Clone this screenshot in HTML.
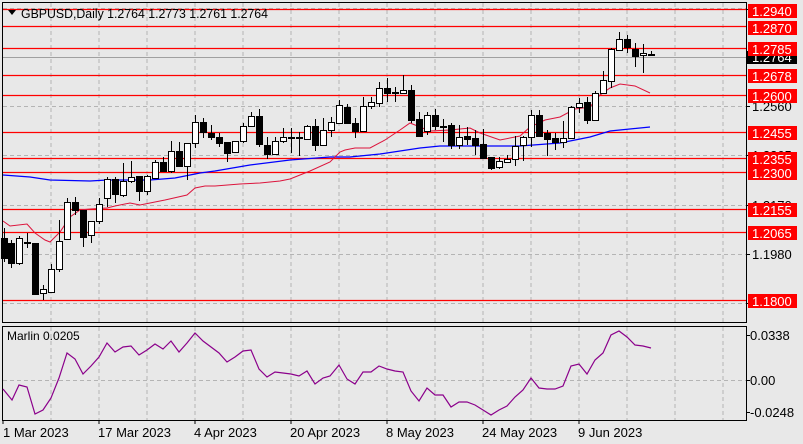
<!DOCTYPE html>
<html><head><meta charset="utf-8"><style>
html,body{margin:0;padding:0;background:#e8e8e8;}
svg{display:block;font-family:"Liberation Sans",sans-serif;}
</style></head><body>
<svg id="s" width="803" height="444" viewBox="0 0 803 444" xmlns="http://www.w3.org/2000/svg">
<rect width="803" height="444" fill="#e8e8e8"/>
<g stroke="#b4b4b4" stroke-dasharray="4,3" stroke-width="1" fill="none">
<path d="M51 3V322M99 3V322M147 3V322M195 3V322M243 3V322M291 3V322M339 3V322M387 3V322M435 3V322M483 3V322M531 3V322M579 3V322M627 3V322M675 3V322M723 3V322"/>
<path d="M51 327V420M99 327V420M147 327V420M195 327V420M243 327V420M291 327V420M339 327V420M387 327V420M435 327V420M483 327V420M531 327V420M579 327V420M627 327V420M675 327V420M723 327V420"/>
<path d="M3 8.5H746M3 106.5H746M3 155.5H746M3 205.5H746M3 254.5H746M3 303.5H746M3 380.5H746"/>
</g>
<line x1="3" y1="57.5" x2="746" y2="57.5" stroke="#a0a0a0"/>
<g stroke="#ff0000" stroke-width="1.3">
<line x1="3" y1="9.5" x2="746" y2="9.5"/><line x1="3" y1="26.5" x2="746" y2="26.5"/>
<line x1="3" y1="48.5" x2="746" y2="48.5"/><line x1="3" y1="75.5" x2="746" y2="75.5"/>
<line x1="3" y1="95.5" x2="746" y2="95.5"/><line x1="3" y1="132.5" x2="746" y2="132.5"/>
<line x1="3" y1="158.5" x2="746" y2="158.5"/><line x1="3" y1="172.5" x2="746" y2="172.5"/>
<line x1="3" y1="209.5" x2="746" y2="209.5"/><line x1="3" y1="232.5" x2="746" y2="232.5"/>
<line x1="3" y1="300.5" x2="746" y2="300.5"/>
</g>
<polyline fill="none" stroke="#0000ff" stroke-width="1.3" points="3,175 30,177 50,180 90,181 107,180 150,180 175,178 190,175 200,173 215,171 250,165 290,160 330,157 350,157 380,154 420,148 440,146 480,146 520,146 560,143 590,137 610,131 650,127"/>
<polyline fill="none" stroke="#dc143c" stroke-width="1" points="3,221 10,226 27,224 35,233 45,240 50,242 60,232 70,217 80,210 90,209 107,208 115,206 130,203 140,205 155,202 165,200 187,195 195,188 205,186 215,186 240,184 260,183 280,181 290,179 310,171 330,162 340,152 345,150 355,148 370,148 385,140 400,130 410,123 420,127 430,131 450,130 470,128 480,133 500,140 520,136 530,127 545,120 560,117 575,109 590,107 600,95 610,88 620,84 635,86 650,93"/>
<g id="c"></g>
<rect x="2.5" y="2.5" width="744" height="320" fill="none" stroke="#000" stroke-width="1"/>
<rect x="2.5" y="326.5" width="744" height="94" fill="none" stroke="#000" stroke-width="1"/>
<polyline fill="none" stroke="#8b008b" stroke-width="1.2" points="3,389 12,400 19,385 27,387 35,414 43,410 51,398 59,378 67,353 75,359 83,374 91,366 99,357 107,343 115,352 123,347 131,346 139,355 147,350 155,344 163,349 171,341 179,352 187,343 195,333 203,341 211,347 219,353 227,362 235,357 243,351 251,350 259,369 267,377 275,372 283,373 291,374 299,376 307,371 315,384 323,378 330,376 339,365 347,379 355,384 363,372 371,372 379,366 387,369 395,371 403,372 411,391 419,401 427,388 435,395 443,395 451,407 459,402 467,402 475,405 483,410 491,415 499,410 507,406 515,397 523,390 531,378 539,388 547,389 555,389 563,386 571,366 579,364 587,374 595,360 603,353 611,335 619,331 627,337 635,345 643,346 651,348"/>
<path d="M8 10L16 10L12 15Z" fill="#000"/>
<text x="21" y="18" font-size="13" fill="#000" textLength="247" lengthAdjust="spacingAndGlyphs">GBPUSD,Daily  1.2764 1.2773 1.2761 1.2764</text>
<text x="7" y="340" font-size="12" fill="#000">Marlin 0.0205</text>
<g stroke="#000"><path d="M746 9.5h4M746 106.5h4M746 155.5h4M746 205.5h4M746 254.5h4M746 303.5h4M746 335.5h4M746 380.5h4M746 412.5h4M3 420v4M99 420v4M195 420v4M291 420v4M387 420v4M483 420v4M579 420v4"/></g>
<g font-size="13" fill="#000">
<text x="752" y="111">1.2560</text>
<text x="752" y="160">1.2365</text>
<text x="752" y="210">1.2170</text>
<text x="752" y="259">1.1980</text>
<text x="750" y="340">0.0338</text>
<text x="750" y="385">0.00</text>
<text x="750" y="417">-0.0248</text>
</g>
<rect x="747" y="51" width="50" height="13" fill="#000"/>
<text x="752" y="62" font-size="13" fill="#fff">1.2764</text>
<g fill="#ff0000">
<rect x="748" y="4" width="49" height="14"/><rect x="748" y="21" width="49" height="14"/>
<rect x="748" y="42" width="49" height="14"/><rect x="748" y="69" width="49" height="14"/>
<rect x="748" y="89" width="49" height="14"/><rect x="748" y="126" width="49" height="14"/>
<rect x="748" y="152" width="49" height="14"/><rect x="748" y="166" width="49" height="14"/>
<rect x="748" y="203" width="49" height="14"/><rect x="748" y="226" width="49" height="14"/>
<rect x="748" y="294" width="49" height="14"/>
</g>
<g font-size="13" fill="#fff">
<text x="752" y="16">1.2940</text><text x="752" y="33">1.2870</text>
<text x="752" y="54">1.2785</text><text x="752" y="81">1.2678</text>
<text x="752" y="101">1.2600</text><text x="752" y="138">1.2455</text>
<text x="752" y="164">1.2355</text><text x="752" y="178">1.2300</text>
<text x="752" y="215">1.2155</text><text x="752" y="238">1.2065</text>
<text x="752" y="306">1.1800</text>
</g>
<g font-size="13" fill="#000">
<text x="3" y="437">1 Mar 2023</text><text x="98" y="437">17 Mar 2023</text>
<text x="194" y="437">4 Apr 2023</text><text x="290" y="437">20 Apr 2023</text>
<text x="386" y="437">8 May 2023</text><text x="482" y="437">24 May 2023</text>
<text x="578" y="437">9 Jun 2023</text>
</g>
</svg>
<script>
var d=[[4,238,258,228,262,1],[11,243,263,240,268,1],[19,238,263,236,265,0],[27,242,243,233,248,1],[35,243,294,243,294,1],[43,289,293,285,300,0],[51,269,292,264,293,0],[59,241,269,220,272,0],[67,202,239,198,239,0],[75,202,210,197,215,1],[83,210,237,210,247,1],[91,221,235,221,243,0],[99,204,221,198,224,0],[107,179,198,177,207,0],[115,179,194,177,203,1],[123,181,195,163,197,0],[131,177,181,161,183,0],[139,176,191,176,201,1],[147,176,191,175,195,0],[155,162,178,160,178,0],[163,162,171,157,172,1],[171,151,171,141,173,0],[179,151,166,142,167,1],[187,143,166,143,180,0],[195,122,143,115,148,0],[203,122,132,118,138,1],[211,133,137,125,140,1],[219,137,143,133,147,1],[227,142,153,142,162,1],[235,141,152,141,153,0],[243,126,141,123,143,0],[251,116,126,112,127,0],[259,116,144,109,147,1],[267,145,154,137,159,1],[275,141,154,137,155,0],[283,137,141,128,143,0],[291,137,138,128,153,0],[299,137,138,132,156,0],[307,126,139,125,140,0],[315,126,145,119,151,1],[323,130,145,118,146,0],[331,122,130,117,137,0],[339,105,123,100,124,0],[347,107,123,104,124,1],[355,123,131,118,138,1],[363,106,131,97,132,0],[371,102,106,97,109,0],[379,88,103,82,107,0],[387,88,93,78,102,1],[395,92,93,87,102,0],[403,90,93,75,93,0],[411,90,120,85,123,1],[419,119,136,112,136,1],[427,115,131,112,135,0],[435,115,126,109,130,1],[443,126,127,119,142,0],[451,125,145,123,149,1],[459,137,145,125,149,0],[467,136,139,127,145,1],[475,138,145,130,155,1],[483,144,158,129,158,1],[491,157,168,157,170,1],[499,161,167,157,169,0],[507,159,162,155,163,0],[515,146,159,136,166,0],[523,137,145,136,161,0],[531,115,137,110,147,0],[539,115,136,110,137,1],[547,133,139,130,156,1],[555,138,142,133,150,1],[563,138,142,121,148,0],[571,107,138,106,138,0],[579,103,107,98,113,0],[587,102,120,97,124,1],[595,93,120,91,121,0],[603,80,93,71,94,0],[611,49,81,48,88,0],[619,39,50,32,51,0],[627,39,47,35,53,1],[635,49,56,43,67,1],[643,53,55,44,73,0],[651,54,55,51,55,0]];
var g=document.getElementById('c'),h='';
d.forEach(function(c){var x=c[0];
h+='<line x1="'+(x+.5)+'" y1="'+c[3]+'" x2="'+(x+.5)+'" y2="'+c[4]+'" stroke="#000"/>';
var t=c[1],b=c[2];if(b-t<1)b=t+1;
h+='<rect x="'+(x-2.5)+'" y="'+(t+.5)+'" width="6" height="'+(b-t)+'" fill="'+(c[5]?'#000':'#fff')+'" stroke="#000"/>';});
g.innerHTML=h;
</script>
</body></html>
